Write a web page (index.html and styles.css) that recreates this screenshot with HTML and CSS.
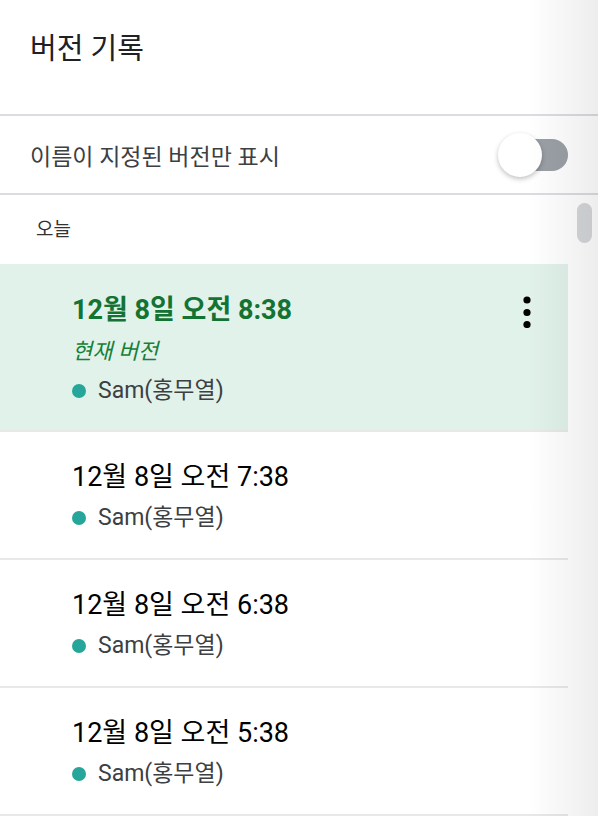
FILE: index.html
```html
<!DOCTYPE html>
<html lang="ko">
<head>
    <meta charset="UTF-8">
    <meta name="viewport" content="width=device-width, initial-scale=1.0">
    <title>버전 기록</title>
    <link rel="stylesheet" href="styles.css">
</head>
<body>

    <div class="panel">
        <!-- 헤더 -->
        <div class="panel-header">
            <h1>버전 기록</h1>
        </div>

        <!-- 필터 스위치 -->
        <div class="filter-row">
            <span class="filter-label">이름이 지정된 버전만 표시</span>
            <div class="switch">
                <span class="switch-track"></span>
                <span class="switch-knob"></span>
            </div>
        </div>

        <!-- 버전 목록 -->
        <div class="list-wrap">
            <div class="list">
                <div class="group-label">오늘</div>

                <div class="version current">
                    <div class="version-top">
                        <div class="version-time">12월 8일 오전 8:38</div>
                        <svg class="kebab" width="10" height="32" viewBox="0 0 10 32">
                            <circle cx="5" cy="4" r="3.6"/>
                            <circle cx="5" cy="16.5" r="3.6"/>
                            <circle cx="5" cy="28.5" r="3.6"/>
                        </svg>
                    </div>
                    <div class="version-name">현재 버전</div>
                    <div class="version-author"><span class="dot"></span>Sam(홍무열)</div>
                </div>

                <div class="version">
                    <div class="version-time">12월 8일 오전 7:38</div>
                    <div class="version-author"><span class="dot"></span>Sam(홍무열)</div>
                </div>

                <div class="version">
                    <div class="version-time">12월 8일 오전 6:38</div>
                    <div class="version-author"><span class="dot"></span>Sam(홍무열)</div>
                </div>

                <div class="version">
                    <div class="version-time">12월 8일 오전 5:38</div>
                    <div class="version-author"><span class="dot"></span>Sam(홍무열)</div>
                </div>
            </div>

            <div class="scrollbar">
                <div class="scroll-thumb"></div>
            </div>
        </div>

        <!-- 오른쪽 그림자 -->
        <div class="edge-shadow"></div>
    </div>

</body>
</html>
```

FILE: styles.css
```css
body {
    font-family: Roboto, "Noto Sans CJK KR", sans-serif;
    margin: 0;
    padding: 0;
    background-color: #fff;
}
.panel {
    position: relative;
    width: 598px;
    height: 816px;
    overflow: hidden;
    background-color: #fff;
}
.panel-header {
    height: 114px;
    padding: 0 30px;
    border-bottom: 2px solid #dadce0;
}
.panel-header h1 {
    margin: 0;
    padding-top: 28px;
    font-size: 29px;
    line-height: 42px;
    font-weight: normal;
    color: #202124;
}
.filter-row {
    height: 77px;
    display: flex;
    align-items: center;
    justify-content: space-between;
    padding: 0 30px;
    border-bottom: 2px solid #dadce0;
}
.filter-label {
    font-size: 23px;
    color: #3c4043;
}
.switch {
    position: relative;
    width: 70px;
    height: 44px;
}
.switch-track {
    position: absolute;
    right: 0;
    top: 6px;
    width: 62px;
    height: 32px;
    border-radius: 16px;
    background-color: #9aa0a6;
}
.switch-knob {
    position: absolute;
    left: 0;
    top: 0;
    width: 44px;
    height: 44px;
    border-radius: 50%;
    background-color: #fff;
    box-shadow: 0 2px 5px rgba(0, 0, 0, 0.25);
}
.list-wrap {
    display: flex;
}
.list {
    width: 568px;
}
.group-label {
    height: 69px;
    line-height: 70px;
    padding-left: 36px;
    font-size: 19px;
    color: #333;
}
.version {
    height: 128px;
    box-sizing: border-box;
    padding: 29px 30px 0 72px;
    border-bottom: 2px solid #e8e8e8;
}
.version.current {
    height: 168px;
    padding-top: 30px;
    background-color: #e1f2ea;
}
.version-top {
    display: flex;
    justify-content: space-between;
    align-items: flex-start;
}
.version-time {
    font-size: 27px;
    line-height: 32px;
    color: #000;
}
.current .version-time {
    font-weight: bold;
    color: #137333;
}
.kebab {
    fill: #000;
    margin-top: 2px;
    margin-right: 6px;
}
.version-name {
    margin-top: 10px;
    font-size: 22px;
    line-height: 28px;
    font-style: italic;
    color: #188038;
}
.version-author {
    display: flex;
    align-items: center;
    margin-top: 11px;
    font-size: 23px;
    line-height: 28px;
    color: #3c4043;
}
.dot {
    width: 14px;
    height: 14px;
    border-radius: 50%;
    background-color: #26a69a;
    margin-right: 12px;
}
.scrollbar {
    width: 30px;
    padding-top: 8px;
}
.scroll-thumb {
    width: 15px;
    height: 40px;
    margin-left: 9px;
    border-radius: 8px;
    background-color: #d6d7da;
}

/* 오른쪽 그림자 */
.edge-shadow {
    position: absolute;
    top: 0;
    right: 0;
    width: 70px;
    height: 100%;
    background: linear-gradient(to right, rgba(0, 0, 0, 0), rgba(0, 0, 0, 0.07));
    pointer-events: none;
}
```
